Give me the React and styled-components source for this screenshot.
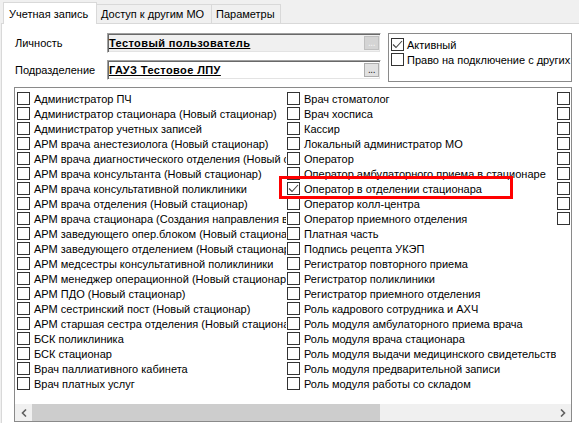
import styled, { createGlobalStyle } from "styled-components";

const GlobalStyle = createGlobalStyle`
  html, body {
    margin: 0;
    padding: 0;
  }
  body {
    background: #f0f0f0;
    font-family: "Liberation Sans", Arial, sans-serif;
    font-size: 11px;
    color: #000;
  }
`;

const Window = styled.div`
  width: 579px;
  height: 423px;
  overflow: hidden;
  background: #f0f0f0;
`;

// tab headers
const TabStrip = styled.div`
  display: flex;
  align-items: flex-end;
  height: 23px;
  padding-left: 3px;
  position: relative;
  z-index: 1;
`;

const Tab = styled.div`
  box-sizing: border-box;
  width: ${(p) => p.$width}px;
  height: ${(p) => (p.$active ? "22px" : "19px")};
  margin-bottom: ${(p) => (p.$active ? "-1px" : "0")};
  padding-left: ${(p) => (p.$active ? "5px" : "4px")};
  display: flex;
  align-items: center;
  background: ${(p) => (p.$active ? "#fff" : "#f0f0f0")};
  border: 1px solid #d9d9d9;
  border-bottom: none;
  border-left: ${(p) => (p.$first ? "1px solid #d9d9d9" : "none")};
  white-space: nowrap;
`;

const TabPage = styled.div`
  box-sizing: border-box;
  margin-left: 1px;
  width: 620px;
  height: 420px;
  background: #fff;
  border: 1px solid #d9d9d9;
  padding: 9px 0 0 12px;
`;

// top part: person / department fields + flags
const TopArea = styled.div`
  display: flex;
  align-items: flex-start;
  height: 49px;
`;

const FieldsColumn = styled.div`
  display: flex;
  flex-direction: column;
  gap: 7px;
`;

const FieldRow = styled.div`
  display: flex;
  align-items: center;
  height: 20px;
`;

const Label = styled.div`
  box-sizing: border-box;
  width: 93px;
  padding-left: 1px;
`;

const Field = styled.div`
  box-sizing: border-box;
  width: 274px;
  height: 20px;
  display: flex;
  align-items: center;
  padding-left: 1px;
  background: ${(p) => (p.$disabled ? "#f0f0f0" : "#fff")};
  border: 1px solid;
  border-color: #a0a0a0 #fff #fff #a0a0a0;
  box-shadow: inset 1px 1px 0 #696969, inset -1px -1px 0 #e3e3e3;
`;

const FieldText = styled.div`
  flex: 1;
  font-weight: bold;
  letter-spacing: 0.4px;
  text-decoration: underline;
  white-space: nowrap;
`;

const BrowseButton = styled.div`
  box-sizing: border-box;
  width: 15px;
  height: 14px;
  margin-right: 1px;
  display: flex;
  align-items: flex-end;
  justify-content: center;
  font-size: 10px;
  line-height: 9px;
  letter-spacing: -0.5px;
  background: ${(p) => (p.$disabled ? "#d4d4d4" : "#e1e1e1")};
  border: 1px solid ${(p) => (p.$disabled ? "#bfbfbf" : "#adadad")};
  color: ${(p) => (p.$disabled ? "#f4f4f4" : "#222")};
  padding-bottom: 2px;
`;

const GroupBox = styled.div`
  box-sizing: border-box;
  margin-left: 7px;
  width: 184px;
  height: 49px;
  border: 1px solid #8a8a8a;
  padding: 3px 0 0 2px;
  overflow: hidden;
`;

const CheckRow = styled.div`
  display: flex;
  align-items: center;
  height: 15px;
  white-space: nowrap;
  gap: ${(p) => p.$gap}px;
`;

const Box = styled.div`
  box-sizing: border-box;
  flex: none;
  width: 13px;
  height: 13px;
  border: 1px solid #333;
  background: #fff;
  display: flex;
  align-items: center;
  justify-content: center;
`;

// roles list (multi-column checked list)
const ListBox = styled.div`
  box-sizing: border-box;
  margin-top: 5px;
  width: 558px;
  height: 335px;
  border: 1px solid #8a8a8a;
  background: #fff;
  display: flex;
  flex-direction: column;
`;

const ListArea = styled.div`
  position: relative;
  flex: 1;
  overflow: hidden;
  padding: 3px 0 0 1px;
`;

const Columns = styled.div`
  display: grid;
  grid-auto-flow: column;
  grid-template-rows: repeat(20, 15px);
  grid-auto-columns: 270px;
`;

const Item = styled.div`
  display: flex;
  align-items: center;
  overflow: hidden;
  white-space: nowrap;
  padding-left: 1px;
  gap: 4px;
`;

const Highlight = styled.div`
  position: absolute;
  left: 264px;
  top: 88px;
  width: 234px;
  height: 23px;
  box-sizing: border-box;
  border: 3px solid #f00;
`;

const ScrollBar = styled.div`
  flex: none;
  height: 17px;
  display: flex;
  background: #f0f0f0;
`;

const ArrowButton = styled.div`
  width: 17px;
  flex: none;
  display: flex;
  align-items: center;
  justify-content: center;
`;

const Track = styled.div`
  flex: 1;
  display: flex;
`;

const Thumb = styled.div`
  width: 348px;
  background: #cdcdcd;
`;

const Check = () => (
  <svg width="11" height="11" viewBox="0 0 11 11">
    <polyline points="1,5.5 4,8.5 10,2" fill="none" stroke="#444" strokeWidth="1.1" />
  </svg>
);

const Arrow = ({ dir }) => (
  <svg width="6" height="8" viewBox="0 0 6 8">
    <polyline
      points={dir === "left" ? "5,0.5 1.5,4 5,7.5" : "1,0.5 4.5,4 1,7.5"}
      fill="none"
      stroke="#606060"
      strokeWidth="1.6"
    />
  </svg>
);

const roles = [
  "Администратор ПЧ",
  "Администратор стационара (Новый стационар)",
  "Администратор учетных записей",
  "АРМ врача анестезиолога (Новый стационар)",
  "АРМ врача диагностического отделения (Новый стационар)",
  "АРМ врача консультанта (Новый стационар)",
  "АРМ врача консультативной поликлиники",
  "АРМ врача отделения (Новый стационар)",
  "АРМ врача стационара (Создания направления в стационар)",
  "АРМ заведующего опер.блоком (Новый стационар)",
  "АРМ заведующего отделением (Новый стационар)",
  "АРМ медсестры консультативной поликлиники",
  "АРМ менеджер операционной (Новый стационар)",
  "АРМ ПДО (Новый стационар)",
  "АРМ сестринский пост (Новый стационар)",
  "АРМ старшая сестра отделения (Новый стационар)",
  "БСК поликлиника",
  "БСК стационар",
  "Врач паллиативного кабинета",
  "Врач платных услуг",
  "Врач стоматолог",
  "Врач хосписа",
  "Кассир",
  "Локальный администратор МО",
  "Оператор",
  "Оператор амбулаторного приема в стационаре",
  "Оператор в отделении стационара",
  "Оператор колл-центра",
  "Оператор приемного отделения",
  "Платная часть",
  "Подпись рецепта УКЭП",
  "Регистратор повторного приема",
  "Регистратор поликлиники",
  "Регистратор приемного отделения",
  "Роль кадрового сотрудника и АХЧ",
  "Роль модуля амбулаторного приема врача",
  "Роль модуля врача стационара",
  "Роль модуля выдачи медицинского свидетельства",
  "Роль модуля предварительной записи",
  "Роль модуля работы со складом",
  "Роль модуля регистратуры",
  "Роль модуля статистики",
  "Руководитель МО",
  "Сотрудник аптеки",
  "Сотрудник лаборатории",
  "Сотрудник СМП",
  "Старшая медсестра",
  "Фельдшер ФАП",
  "Эксперт качества",
];

const checked = ["Оператор в отделении стационара"];

const App = () => {
  return (
    <Window>
      <GlobalStyle />
      <TabStrip>
        <Tab $active $first $width={94}>Учетная запись</Tab>
        <Tab $width={115}>Доступ к другим МО</Tab>
        <Tab $width={69}>Параметры</Tab>
      </TabStrip>
      <TabPage>
        <TopArea>
          <FieldsColumn>
            <FieldRow>
              <Label>Личность</Label>
              <Field $disabled>
                <FieldText>Тестовый пользователь</FieldText>
                <BrowseButton $disabled>...</BrowseButton>
              </Field>
            </FieldRow>
            <FieldRow>
              <Label>Подразделение</Label>
              <Field>
                <FieldText>ГАУЗ Тестовое ЛПУ</FieldText>
                <BrowseButton>...</BrowseButton>
              </Field>
            </FieldRow>
          </FieldsColumn>
          <GroupBox>
            <CheckRow $gap={3}>
              <Box><Check /></Box>
              Активный
            </CheckRow>
            <CheckRow $gap={3}>
              <Box />
              Право на подключение с других МО
            </CheckRow>
          </GroupBox>
        </TopArea>
        <ListBox>
          <ListArea>
            <Columns>
              {roles.map((r) => (
                <Item key={r}>
                  <Box>{checked.includes(r) && <Check />}</Box>
                  {r}
                </Item>
              ))}
            </Columns>
            <Highlight />
          </ListArea>
          <ScrollBar>
            <ArrowButton><Arrow dir="left" /></ArrowButton>
            <Track>
              <Thumb />
            </Track>
            <ArrowButton><Arrow dir="right" /></ArrowButton>
          </ScrollBar>
        </ListBox>
      </TabPage>
    </Window>
  );
};

export default App;
